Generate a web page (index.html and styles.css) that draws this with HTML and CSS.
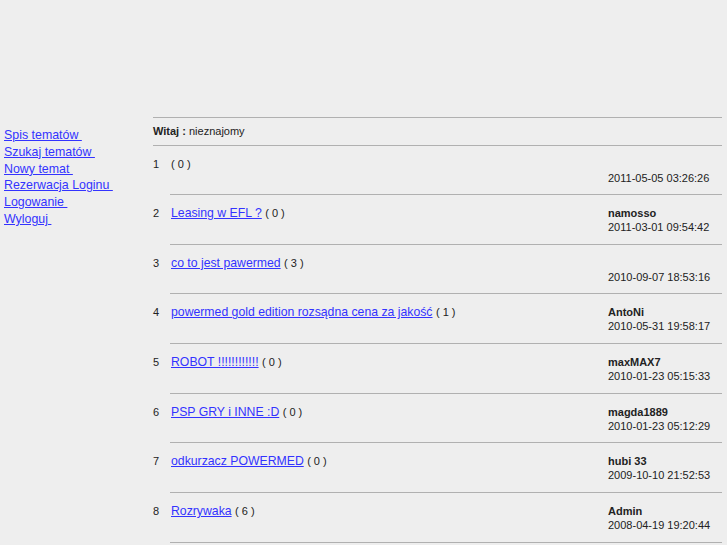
FILE: index.html
```html
<!DOCTYPE html>
<html lang="pl">
<head>
<meta charset="utf-8">
<title>Forum</title>
<link rel="stylesheet" href="styles.css">
</head>
<body>
<div class="page">
  <nav class="menu">
    <a href="#">Spis tematów </a>
    <a href="#">Szukaj tematów </a>
    <a href="#">Nowy temat </a>
    <a href="#">Rezerwacja Loginu </a>
    <a href="#">Logowanie </a>
    <a href="#">Wyloguj </a>
  </nav>
  <main class="main">
    <div class="welcome"><b>Witaj :</b> nieznajomy</div>
    <div class="topics">
      <div class="row">
        <div class="num">1</div>
        <div class="body">
          <div class="title"><span class="count">( 0 )</span></div>
          <div class="meta"><div class="author"></div><div class="date">2011-05-05 03:26:26</div></div>
        </div>
      </div>
      <div class="row">
        <div class="num">2</div>
        <div class="body">
          <div class="title"><a href="#">Leasing w EFL ?</a> <span class="count">( 0 )</span></div>
          <div class="meta"><div class="author">namosso</div><div class="date">2011-03-01 09:54:42</div></div>
        </div>
      </div>
      <div class="row">
        <div class="num">3</div>
        <div class="body">
          <div class="title"><a href="#">co to jest pawermed</a> <span class="count">( 3 )</span></div>
          <div class="meta"><div class="author"></div><div class="date">2010-09-07 18:53:16</div></div>
        </div>
      </div>
      <div class="row">
        <div class="num">4</div>
        <div class="body">
          <div class="title"><a href="#">powermed gold edition rozsądna cena za jakość</a> <span class="count">( 1 )</span></div>
          <div class="meta"><div class="author">AntoNi</div><div class="date">2010-05-31 19:58:17</div></div>
        </div>
      </div>
      <div class="row">
        <div class="num">5</div>
        <div class="body">
          <div class="title"><a href="#">ROBOT !!!!!!!!!!!!</a> <span class="count">( 0 )</span></div>
          <div class="meta"><div class="author">maxMAX7</div><div class="date">2010-01-23 05:15:33</div></div>
        </div>
      </div>
      <div class="row">
        <div class="num">6</div>
        <div class="body">
          <div class="title"><a href="#">PSP GRY i INNE :D</a> <span class="count">( 0 )</span></div>
          <div class="meta"><div class="author">magda1889</div><div class="date">2010-01-23 05:12:29</div></div>
        </div>
      </div>
      <div class="row">
        <div class="num">7</div>
        <div class="body">
          <div class="title"><a href="#">odkurzacz POWERMED</a> <span class="count">( 0 )</span></div>
          <div class="meta"><div class="author">hubi 33</div><div class="date">2009-10-10 21:52:53</div></div>
        </div>
      </div>
      <div class="row">
        <div class="num">8</div>
        <div class="body">
          <div class="title"><a href="#">Rozrywaka</a> <span class="count">( 6 )</span></div>
          <div class="meta"><div class="author">Admin</div><div class="date">2008-04-19 19:20:44</div></div>
        </div>
      </div>
    </div>
  </main>
</div>
</body>
</html>
```

FILE: styles.css
```css
html, body {
  margin: 0;
  padding: 0;
  background: #eeeeee;
}
body {
  font-family: "Liberation Sans", Arial, sans-serif;
  color: #222222;
}
a {
  color: #3333ff;
  text-decoration: underline;
}
.page {
  display: flex;
  align-items: flex-start;
}
.menu {
  width: 149px;
  padding: 127px 0 0 4px;
  display: flex;
  flex-direction: column;
  align-items: flex-start;
  font-size: 12.4px;
  line-height: 16.8px;
  white-space: pre;
}
.main {
  width: 569px;
  padding-top: 117px;
}
.welcome {
  border-top: 1px solid #b0b0b0;
  border-bottom: 1px solid #b0b0b0;
  height: 27px;
  line-height: 27px;
  font-size: 11px;
}
.row {
  display: flex;
}
.num {
  width: 17px;
  font-size: 11px;
  padding-top: 11px;
  line-height: 14px;
}
.body {
  flex: 1;
  display: flex;
  height: 48.7px;
  box-sizing: content-box;
  border-bottom: 1px solid #b0b0b0;
}
.row:first-child .body {
  height: 48px;
}
.row:first-child .num,
.row:first-child .title,
.row:first-child .meta {
  padding-top: 10.5px;
}
.title {
  flex: 1;
  padding: 11px 0 0 1px;
  font-size: 12.25px;
  line-height: 14px;
}
.count {
  font-size: 11px;
}
.meta {
  width: 114px;
  padding-top: 11px;
  line-height: 14px;
}
.author {
  height: 14px;
  font-size: 11px;
  font-weight: bold;
}
.date {
  font-size: 11px;
}
```
